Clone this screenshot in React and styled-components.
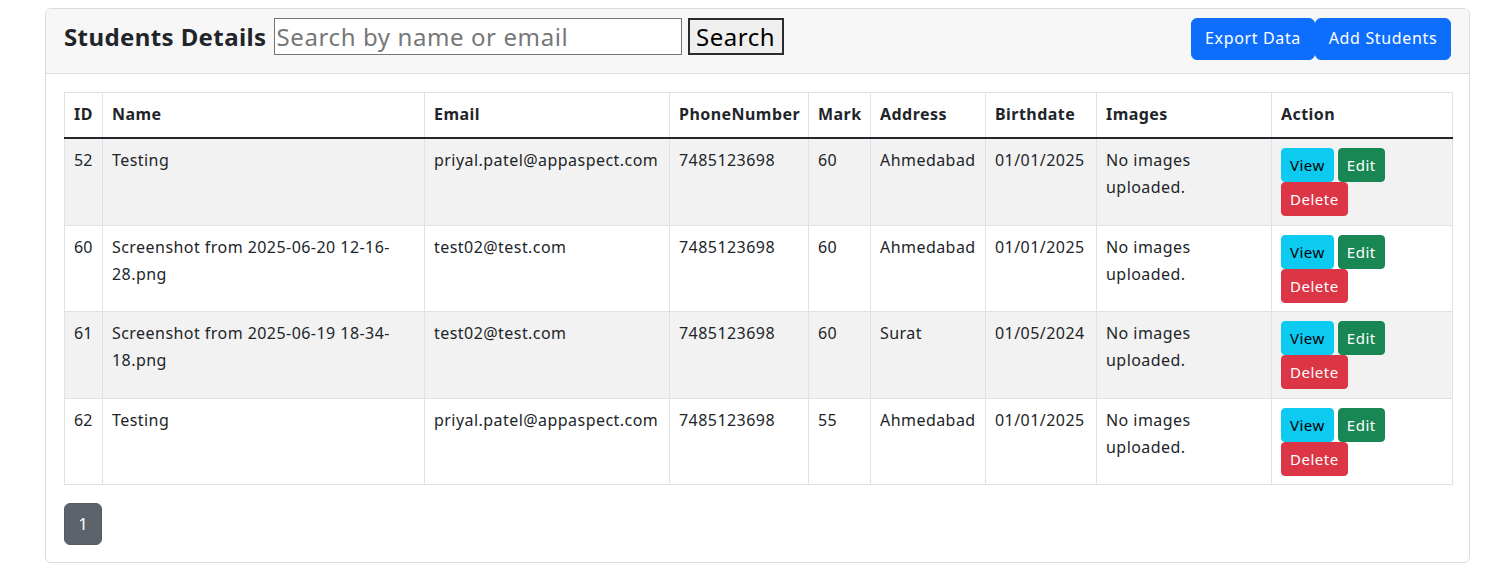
import React from "react";
import styled, { createGlobalStyle } from "styled-components";

const Global = createGlobalStyle`
  body {
    margin: 8px;
    font-family: "Noto Sans", "Open Sans", sans-serif;
    color: #212529;
    background: #fff;
    font-size: 16px;
    line-height: 1.7;
    letter-spacing: 0.45px;
  }
  * { box-sizing: border-box; }
`;

const Page = styled.div`
  padding: 0 7px 0 37px;
`;

const Card = styled.div`
  border: 1px solid #dcdcdc;
  border-radius: 6px;
  background: #fff;
  overflow: hidden;
`;

const CardHeader = styled.div`
  display: flex;
  justify-content: space-between;
  align-items: flex-start;
  padding: 9px 18px 13px;
  background: #f7f7f7;
  border-bottom: 1px solid #dcdcdc;
`;

const LeftGroup = styled.div`
  display: flex;
  align-items: center;
  height: 37px;
`;

const Title = styled.h4`
  margin: 1px 7px 0 0;
  font-size: 24px;
  font-weight: 700;
  line-height: 1.2;
  letter-spacing: 0.4px;
`;

const SearchInput = styled.input`
  width: 408px;
  height: 37px;
  font-family: inherit;
  font-size: 24px;
  letter-spacing: 0.6px;
  padding: 0 2px;
  border: 1px solid #767676;
  background: #fff;
  color: #212529;
  &::placeholder { color: #777; }
  outline: none;
`;

const SearchButton = styled.button`
  margin-left: 6px;
  height: 37px;
  width: 96px;
  font-family: inherit;
  font-size: 24px;
  letter-spacing: 0.5px;
  line-height: 1;
  padding: 0 4px;
  background: #efefef;
  color: #000;
  border: 2px solid #2b2b2b;
  border-radius: 0;
`;

const RightGroup = styled.div`
  display: flex;
`;

const PrimaryButton = styled.button`
  height: 42px;
  width: ${(p) => p.$w}px;
  font-family: inherit;
  font-size: 16px;
  letter-spacing: 0.65px;
  line-height: 1.7;
  padding: 6px 8px;
  color: #fff;
  background: #0d6efd;
  border: 1px solid #0d6efd;
  border-radius: 6px;
  white-space: nowrap;
`;

const CardBody = styled.div`
  padding: 18px 18px 17px;
`;

const Table = styled.table`
  width: 100%;
  table-layout: fixed;
  border-collapse: collapse;
  border: 1px solid #dee2e6;
`;

const Th = styled.th`
  text-align: left;
  font-weight: 700;
  padding: 8px 9px 9px;
  border: 1px solid #dee2e6;
  border-bottom: 2px solid #212529;
  background: #fff;
  vertical-align: top;
  white-space: nowrap;
`;

const Tr = styled.tr`
  background: ${(p) => (p.$striped ? "#f2f2f2" : "#fff")};
`;

const Td = styled.td`
  padding: 8px 9px;
  border: 1px solid #dee2e6;
  vertical-align: top;
  overflow-wrap: break-word;
  white-space: ${(p) => (p.$nowrap ? "nowrap" : "normal")};
  letter-spacing: ${(p) => (p.$nowrap ? "0.2px" : "inherit")};
`;

const Actions = styled.div`
  display: flex;
  flex-wrap: wrap;
  column-gap: 4px;
  row-gap: 0;
  width: 120px;
  padding: 1px 0 0.5px;
`;

const SmallButton = styled.button`
  height: 34px;
  font-family: inherit;
  font-size: 15px;
  letter-spacing: 0.5px;
  line-height: 1.6;
  padding: 4px 8px;
  border-radius: 4px;
  border: 1px solid ${(p) => p.$bg};
  background: ${(p) => p.$bg};
  color: ${(p) => p.$fg};
  white-space: nowrap;
`;

const Pagination = styled.div`
  display: flex;
  margin-top: 18px;
`;

const PageButton = styled.button`
  width: 38px;
  height: 42px;
  font-family: inherit;
  font-size: 16px;
  color: #fff;
  background: #5c636a;
  border: 1px solid #565e64;
  border-radius: 6px;
`;

const cols = [38, 322, 245, 139, 62, 115, 111, 175, 181];
const headers = ["ID", "Name", "Email", "PhoneNumber", "Mark", "Address", "Birthdate", "Images", "Action"];

const rows = [
  { id: 52, name: "Testing", email: "priyal.patel@appaspect.com", phone: "7485123698", mark: 60, address: "Ahmedabad", birth: "01/01/2025" },
  { id: 60, name: "Screenshot from 2025-06-20 12-16-28.png", email: "test02@test.com", phone: "7485123698", mark: 60, address: "Ahmedabad", birth: "01/01/2025" },
  { id: 61, name: "Screenshot from 2025-06-19 18-34-18.png", email: "test02@test.com", phone: "7485123698", mark: 60, address: "Surat", birth: "01/05/2024" },
  { id: 62, name: "Testing", email: "priyal.patel@appaspect.com", phone: "7485123698", mark: 55, address: "Ahmedabad", birth: "01/01/2025" },
];

export default function App() {
  return (
    <>
      <Global />
      <Page>
        <Card>
          <CardHeader>
            <LeftGroup>
              <Title>Students Details</Title>
              <SearchInput placeholder="Search by name or email" />
              <SearchButton>Search</SearchButton>
            </LeftGroup>
            <RightGroup>
              <PrimaryButton $w={124}>Export Data</PrimaryButton>
              <PrimaryButton $w={136}>Add Students</PrimaryButton>
            </RightGroup>
          </CardHeader>
          <CardBody>
            <Table>
              <colgroup>
                {cols.map((w, i) => (
                  <col key={i} style={{ width: w }} />
                ))}
              </colgroup>
              <thead>
                <tr>
                  {headers.map((h) => (
                    <Th key={h}>{h}</Th>
                  ))}
                </tr>
              </thead>
              <tbody>
                {rows.map((r, i) => (
                  <Tr key={r.id} $striped={i % 2 === 0}>
                    <Td $nowrap>{r.id}</Td>
                    <Td>{r.name}</Td>
                    <Td>{r.email}</Td>
                    <Td>{r.phone}</Td>
                    <Td>{r.mark}</Td>
                    <Td>{r.address}</Td>
                    <Td>{r.birth}</Td>
                    <Td>No images uploaded.</Td>
                    <Td>
                      <Actions>
                        <SmallButton $bg="#0dcaf0" $fg="#000">View</SmallButton>
                        <SmallButton $bg="#198754" $fg="#fff">Edit</SmallButton>
                        <SmallButton $bg="#dc3545" $fg="#fff">Delete</SmallButton>
                      </Actions>
                    </Td>
                  </Tr>
                ))}
              </tbody>
            </Table>
            <Pagination>
              <PageButton>1</PageButton>
            </Pagination>
          </CardBody>
        </Card>
      </Page>
    </>
  );
}
